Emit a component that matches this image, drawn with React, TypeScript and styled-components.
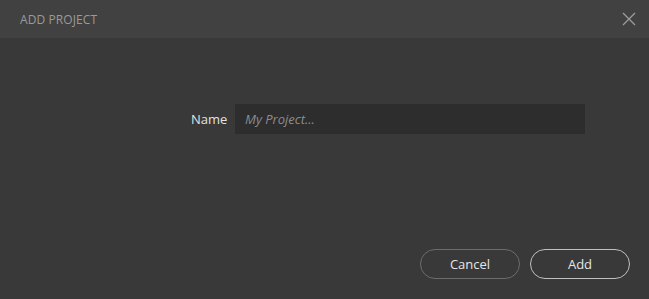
import React from "react";
import styled, { createGlobalStyle } from "styled-components";

const Global = createGlobalStyle`
  html, body { margin: 0; padding: 0; background: #393939; }
  body { font-family: "Open Sans", "Noto Sans", sans-serif; }
  * { box-sizing: border-box; }
`;

const Dialog = styled.div`
  width: 649px;
  height: 299px;
  display: flex;
  flex-direction: column;
  background: #393939;
`;

const Header = styled.div`
  height: 38px;
  flex: none;
  display: flex;
  align-items: center;
  justify-content: space-between;
  padding: 0 12px 0 20px;
  background: #414141;
`;

const Title = styled.div`
  font-size: 12px;
  color: #9a9a9a;
  letter-spacing: 0.1px;
`;

const CloseButton = styled.button`
  width: 16px;
  height: 16px;
  padding: 0;
  border: 0;
  background: none;
  display: flex;
  align-items: center;
  justify-content: center;
  cursor: pointer;
`;

const Body = styled.div`
  flex: 1;
  display: flex;
  flex-direction: column;
  padding: 66px 19px 20px 0;
`;

const FieldRow = styled.div`
  display: flex;
  align-items: center;
  padding-left: 191px;
  gap: 11px;
`;

const Label = styled.label`
  font-size: 13px;
  color: #e2e2e2;
  width: 33px;
`;

const Input = styled.input`
  width: 350px;
  height: 30px;
  border: 0;
  outline: none;
  background: #2d2d2d;
  padding: 0 10px;
  font-family: inherit;
  font-size: 13px;
  color: #ddd;
  &::placeholder {
    color: #8c8c8c;
    font-style: italic;
  }
`;

const Footer = styled.div`
  margin-top: auto;
  display: flex;
  justify-content: flex-end;
  gap: 10px;
`;

const Button = styled.button<{ $primary?: boolean }>`
  width: 100px;
  height: 30px;
  border-radius: 15px;
  background: transparent;
  border: 1px solid ${(p) => (p.$primary ? "#c0c0c0" : "#6c6c6c")};
  color: #e6e6e6;
  font-family: inherit;
  font-size: 13px;
  cursor: pointer;
`;

export default function App() {
  return (
    <>
      <Global />
      <Dialog>
        <Header>
          <Title>ADD PROJECT</Title>
          <CloseButton aria-label="Close">
            <svg width="14" height="14" viewBox="0 0 14 14">
              <path d="M1 1L13 13M13 1L1 13" stroke="#9a9a9a" strokeWidth="1.4" />
            </svg>
          </CloseButton>
        </Header>
        <Body>
          <FieldRow>
            <Label>Name</Label>
            <Input placeholder="My Project..." />
          </FieldRow>
          <Footer>
            <Button>Cancel</Button>
            <Button $primary>Add</Button>
          </Footer>
        </Body>
      </Dialog>
    </>
  );
}
